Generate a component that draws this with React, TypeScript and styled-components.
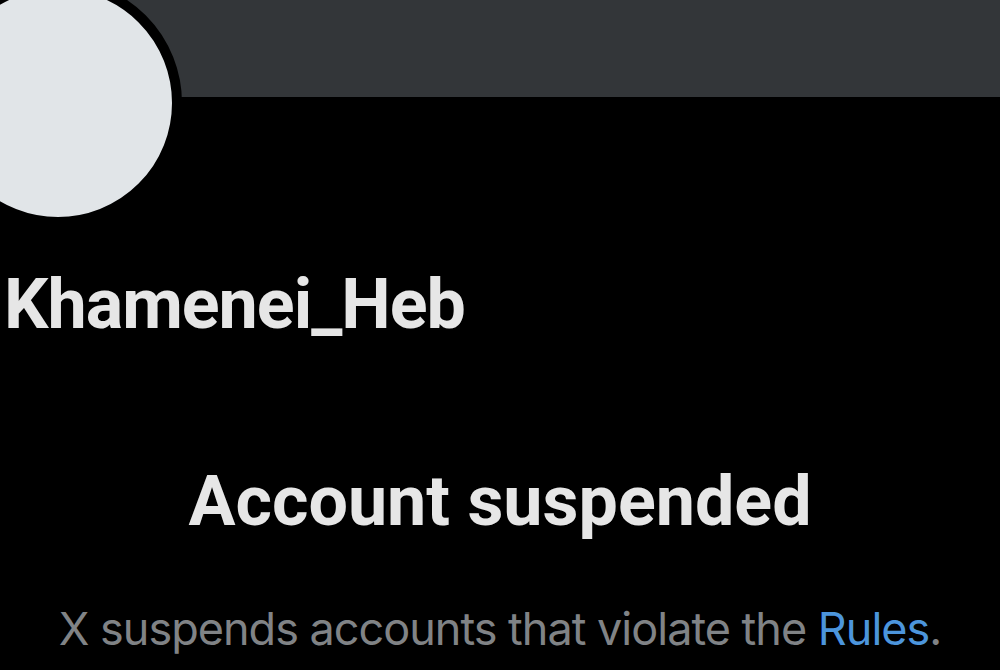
import React from "react";
import styled, { createGlobalStyle } from "styled-components";

const GlobalStyle = createGlobalStyle`
	html, body {
		margin: 0;
		padding: 0;
		background: #000;
	}
	body {
		font-family: Inter, "Noto Sans", "Liberation Sans", sans-serif;
		color: #e7e9ea;
	}
`;

const Page = styled.main`
	position: relative;
	width: 1000px;
	height: 670px;
	overflow: hidden;
	background: #000;
`;

const Banner = styled.div`
	height: 97px;
	background: #333639;
`;

// avatar sits over the banner, partly cut off at the top-left edge
const Avatar = styled.div`
	position: absolute;
	left: -66px;
	top: -21px;
	width: 228px;
	height: 228px;
	border-radius: 50%;
	background: #e1e5e8;
	border: 10px solid #000;
`;

const Profile = styled.section`
	padding: 167px 0 0 4px;
`;

const Handle = styled.h1`
	margin: 0;
	font-family: Roboto, Inter, sans-serif;
	font-size: 70px;
	line-height: 80px;
	font-weight: 700;
	letter-spacing: -1px;
	color: #e6e6e6;
`;

const Notice = styled.section`
	display: flex;
	flex-direction: column;
	align-items: center;
	margin-top: 117px;
`;

const Title = styled.h2`
	margin: 0;
	font-family: Roboto, Inter, sans-serif;
	font-size: 70px;
	line-height: 80px;
	font-weight: 700;
	letter-spacing: 0;
	color: #e6e6e6;
`;

const Info = styled.p`
	margin: 61px 0 0;
	font-size: 45px;
	line-height: 54px;
	font-weight: 400;
	color: #808386;
	letter-spacing: -1px;
	white-space: nowrap;
`;

const Link = styled.a`
	color: #4c95dc;
	text-decoration: none;
`;

export default function App() {
	return (
		<Page>
			<GlobalStyle />
			<Banner />
			<Avatar />
			<Profile>
				<Handle>Khamenei_Heb</Handle>
			</Profile>
			<Notice>
				<Title>Account suspended</Title>
				<Info>
					X suspends accounts that violate the <Link href="#">Rules</Link>.
				</Info>
			</Notice>
		</Page>
	);
}
